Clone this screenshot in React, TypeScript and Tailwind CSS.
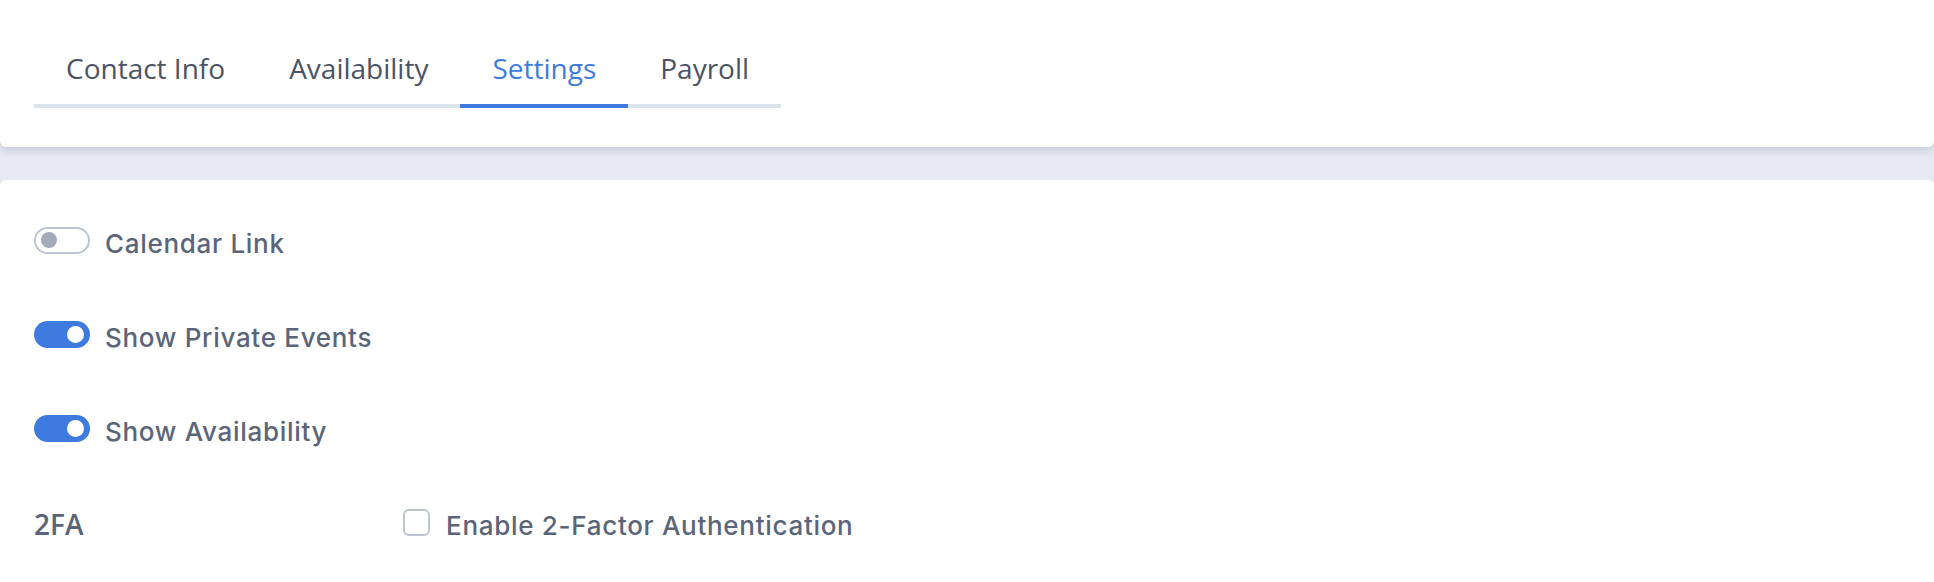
import React from "react";

const tabs = ["Contact Info", "Availability", "Settings", "Payroll"];

const Toggle: React.FC<{ on: boolean }> = ({ on }) =>
  on ? (
    <div className="flex h-[27px] w-[56px] items-center justify-end rounded-full bg-[#3f7bdf] pr-[6px]">
      <div className="h-[17px] w-[17px] rounded-full bg-white" />
    </div>
  ) : (
    <div className="flex h-[27px] w-[56px] items-center rounded-full border-2 border-[#bcc5d3] bg-white pl-[5px]">
      <div className="h-[16px] w-[16px] rounded-full bg-[#a2abbb]" />
    </div>
  );

const ToggleRow: React.FC<{ on: boolean; label: string }> = ({ on, label }) => (
  <div className="flex h-[94px] items-center">
    <Toggle on={on} />
    <span className="ml-[15px] pt-[6px] text-[26px] font-medium leading-[31px] tracking-[0.7px] text-[#5b6579]">
      {label}
    </span>
  </div>
);

export default function App() {
  return (
    <div className="min-h-[582px] bg-[#e7eaf2] font-['Inter',sans-serif]">
      {/* Tabs card */}
      <div className="relative z-10 h-[147px] rounded-b-md bg-white pt-[49px] shadow-[0_3px_10px_rgba(60,70,95,0.2)]">
        <div className="ml-[34px] flex font-['Open_Sans',sans-serif]">
          {tabs.map((t) => (
            <div
              key={t}
              className={
                t === "Settings"
                  ? "border-b-4 border-[#3f7bdf] px-8 pb-[17px] text-[28px] font-medium leading-[38px] text-[#3f7bdf]"
                  : "border-b-4 border-[#dbe3ee] px-8 pb-[17px] text-[28px] font-medium leading-[38px] text-[#4a5365]"
              }
            >
              {t}
            </div>
          ))}
        </div>
      </div>

      {/* Settings card */}
      <div className="mt-[33px] min-h-[402px] rounded-t-md bg-white pl-[34px] pt-[13px]">
        <ToggleRow on={false} label="Calendar Link" />
        <ToggleRow on={true} label="Show Private Events" />
        <ToggleRow on={true} label="Show Availability" />
        <div className="grid h-[94px] grid-cols-[369px_1fr] items-center">
          <span className="pt-[4px] font-['Open_Sans',sans-serif] text-[28px] font-semibold leading-[36px] text-[#5b6579]">
            2FA
          </span>
          <label className="flex items-center">
            <span className="h-[27px] w-[27px] rounded-[6px] border-2 border-[#bcc5d3] bg-white" />
            <span className="ml-[16px] pt-[6px] text-[26px] font-medium leading-[31px] tracking-[0.7px] text-[#5b6579]">
              Enable 2-Factor Authentication
            </span>
          </label>
        </div>
      </div>
    </div>
  );
}
